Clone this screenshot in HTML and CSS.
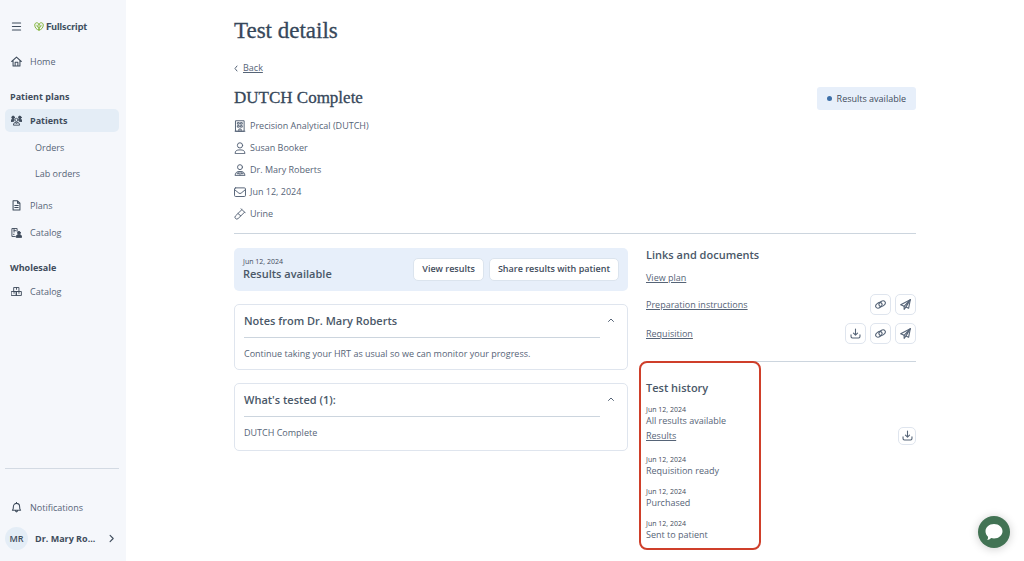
FILE: index.html
```html
<!DOCTYPE html>
<html lang="en">
<head>
  <meta charset="UTF-8">
  <meta name="viewport" content="width=device-width, initial-scale=1.0">
  <title>Test details</title>
  <link rel="stylesheet" href="styles.css">
</head>
<body>

  <!-- shared icons -->
  <svg class="sprite" aria-hidden="true">
    <symbol id="download" viewBox="0 0 16 16"><path d="M8 1.500v8.500M5 7.500l3 3 3-3M1.500 10v2.500a2 2 0 0 0 2 2h9a2 2 0 0 0 2-2V10"/></symbol>
    <symbol id="link" viewBox="0 0 16 16"><ellipse cx="5.600" cy="9.200" rx="5" ry="3.500" transform="rotate(-35 5.600 9.200)"/><ellipse cx="10.400" cy="6.800" rx="5" ry="3.500" transform="rotate(-35 10.400 6.800)"/></symbol>
    <symbol id="send" viewBox="0 0 16 16"><path d="M1 8.500L15 1l-2.500 12.500-4-1.700L6 15v-4.300z"/><path d="M15 1L6 10.700M15 1L8.500 11.800"/></symbol>
    <symbol id="up" viewBox="0 0 16 16"><path d="M3 11l5-5 5 5"/></symbol>
  </svg>

  <aside class="sidebar">
    <div class="brand">
      <button class="menu-btn" aria-label="Menu">
        <svg class="icon" viewBox="0 0 16 16"><path d="M2 3h12M2 8h12M2 13h12"/></svg>
      </button>
      <a href="#" class="logo">
        <svg viewBox="0 0 20 18"><path d="M10 16V5M10 16C5 16 1.500 11 1.500 6c0-3 2-4.500 4-4.500C8 1.500 10 3.500 10 5.500c0-2 2-4 4.500-4 2 0 4 1.500 4 4.500 0 5-3.500 10-8.500 10zM10 12C7.500 11.500 6 9.500 6 6.500M10 12c2.500-.5 4-2.500 4-5.500"/></svg>
        <span>Fullscript</span>
      </a>
    </div>

    <nav class="nav">
      <a href="#" class="nav-link home">
        <svg class="icon" viewBox="0 0 16 16"><path d="M1 8l7-6.500L15 8M3 6.500V14.500h10V6.500M6 14.500V9h4v5.500"/></svg>
        Home
      </a>
      <h2>Patient plans</h2>
      <a href="#" class="nav-link active">
        <svg class="icon solid" viewBox="0 0 18 16"><circle cx="3.500" cy="3" r="2.200"/><circle cx="14.500" cy="3" r="2.200"/><path d="M0 9c0-2 1-3 3-3h2L4.500 9zM18 9c0-2-1-3-3-3h-2l.5 3z"/><g class="line"><circle cx="9" cy="7" r="2.600"/><path d="M4 15c0-2.500 1.500-4 5-4s5 1.500 5 4zM7 11.500l2 2 2-2"/></g></svg>
        Patients
      </a>
      <a href="#" class="nav-link sub">Orders</a>
      <a href="#" class="nav-link sub">Lab orders</a>
      <a href="#" class="nav-link plans">
        <svg class="icon" viewBox="0 0 16 16"><path d="M3 1.200h6.500L13 4.700v10H3zM9.500 1.200v3.500H13M5.500 8h5M5.500 11h5"/></svg>
        Plans
      </a>
      <a href="#" class="nav-link">
        <svg class="icon" viewBox="0 0 18 16"><path d="M7 14.500H1.500v-13H10V6M5 1.500v6M5 5h3M4 11h1"/><g class="fill"><circle cx="13" cy="8.500" r="2.300"/><path d="M8.500 15.500c0-3 1.500-4 4.500-4s4.500 1 4.500 4z"/></g></svg>
        Catalog
      </a>
      <h2>Wholesale</h2>
      <a href="#" class="nav-link">
        <svg class="icon" viewBox="0 0 18 16"><path d="M5 1.500h8v6.500H5zM1 8h8v6.500H1zM9 8h8v6.500H9zM9 1.500v3M5 8v3M13 8v3"/></svg>
        Catalog
      </a>
    </nav>

    <div class="account">
      <a href="#" class="nav-link">
        <svg class="icon" viewBox="0 0 16 16"><path d="M2 12c1.500-1.500 1.500-3 1.500-5.500a4.500 4.500 0 0 1 9 0c0 2.500 0 4 1.500 5.500zM6.500 12.500c0 2.500 3 2.500 3 0M8 .5V2"/></svg>
        Notifications
      </a>
      <button class="user">
        <span class="avatar">MR</span>
        <span class="user-name">Dr. Mary Ro...</span>
        <svg class="icon" viewBox="0 0 16 16"><path d="M5.500 2.500L11 8l-5.500 5.500"/></svg>
      </button>
    </div>
  </aside>

  <main class="main">
    <div class="page">
      <h1>Test details</h1>
      <a href="#" class="back">
        <svg viewBox="0 0 8 14"><path d="M6 2L2 7l4 5"/></svg>
        <span>Back</span>
      </a>

      <div class="title-row">
        <h2>DUTCH Complete</h2>
        <span class="status">Results available</span>
      </div>

      <ul class="facts">
        <li>
          <svg class="icon" viewBox="0 0 16 16"><path d="M2.500 1h11v14h-11zM1.500 15h13M5 3.500h2v2H5zM9 3.500h2v2H9zM5 7.500h2v2H5zM9 7.500h2v2H9zM6.500 15v-3h3v3"/></svg>
          Precision Analytical (DUTCH)
        </li>
        <li>
          <svg class="icon" viewBox="0 0 16 16"><circle cx="8" cy="4.500" r="3.500"/><path d="M1.500 15c0-3.500 2-4.500 6.500-4.500s6.500 1 6.500 4.500z"/></svg>
          Susan Booker
        </li>
        <li>
          <svg class="icon" viewBox="0 0 16 16"><circle cx="8" cy="4.200" r="3.300"/><path d="M1.500 15c0-3.500 2-5 6.500-5s6.500 1.500 6.500 5zM5.500 10.500V13M10.500 10.500V13M8 11v4M4 13h3M9.500 13h3"/></svg>
          Dr. Mary Roberts
        </li>
        <li>
          <svg class="icon" viewBox="0 0 16 16"><rect x=".7" y="2.500" width="14.600" height="11.500" rx="1.500"/><path d="M1 5l5.500 4.500q1.500 1 3 0L15 5"/></svg>
          Jun 12, 2024
        </li>
        <li>
          <svg class="icon" viewBox="0 0 16 16"><path d="M9.500 1l5.500 5.500M10.500 2.200L2 10.500a2.400 2.400 0 0 0 3.500 3.500L14 5.700M5.500 7.500L9 10.500"/></svg>
          Urine
        </li>
      </ul>

      <div class="columns">
        <div class="left">
          <section class="banner">
            <div>
              <p class="date">Jun 12, 2024</p>
              <h3>Results available</h3>
            </div>
            <div class="actions">
              <button class="btn">View results</button>
              <button class="btn">Share results with patient</button>
            </div>
          </section>

          <section class="card">
            <div class="card-body">
              <h3>Notes from Dr. Mary Roberts</h3>
              <p>Continue taking your HRT as usual so we can monitor your progress.</p>
            </div>
            <button class="toggle" aria-label="Collapse notes"><svg><use href="#up"/></svg></button>
          </section>

          <section class="card tested">
            <div class="card-body">
              <h3>What's tested (1):</h3>
              <p>DUTCH Complete</p>
            </div>
            <button class="toggle" aria-label="Collapse tests"><svg><use href="#up"/></svg></button>
          </section>
        </div>

        <div class="right">
          <section class="links">
            <h3>Links and documents</h3>
            <div class="link-row"><a href="#">View plan</a></div>
            <div class="link-row tall">
              <a href="#">Preparation instructions</a>
              <button class="icon-btn" aria-label="Copy link"><svg><use href="#link"/></svg></button>
              <button class="icon-btn" aria-label="Send"><svg><use href="#send"/></svg></button>
            </div>
            <div class="link-row tall">
              <a href="#">Requisition</a>
              <button class="icon-btn" aria-label="Download"><svg><use href="#download"/></svg></button>
              <button class="icon-btn" aria-label="Copy link"><svg><use href="#link"/></svg></button>
              <button class="icon-btn" aria-label="Send"><svg><use href="#send"/></svg></button>
            </div>
          </section>

          <section class="history">
            <h3>Test history</h3>
            <ol>
              <li>
                <p class="date">Jun 12, 2024</p>
                <p>All results available</p>
                <div class="result-row">
                  <a href="#">Results</a>
                  <button class="icon-btn small" aria-label="Download results"><svg><use href="#download"/></svg></button>
                </div>
              </li>
              <li><p class="date">Jun 12, 2024</p><p>Requisition ready</p></li>
              <li><p class="date">Jun 12, 2024</p><p>Purchased</p></li>
              <li><p class="date">Jun 12, 2024</p><p>Sent to patient</p></li>
            </ol>
            <div class="highlight"></div>
          </section>
        </div>
      </div>
    </div>
  </main>

  <button class="chat" aria-label="Open chat">
    <svg viewBox="0 0 20 20"><path d="M10 2c5 0 8.500 3.300 8.500 7.300s-3.500 7.200-8.500 7.200c-1 0-2-.1-2.800-.4C6 17.300 4.500 18 3.200 18c.7-1 1-2.200.8-3.300C2.400 13.400 1.500 11.500 1.500 9.300 1.500 5.300 5 2 10 2z"/></svg>
  </button>

</body>
</html>
```

FILE: styles.css
```css
* {
  margin: 0;
  padding: 0;
  box-sizing: border-box;
}

body {
  display: flex;
  min-height: 100vh;
  font-family: "Open Sans", "Noto Sans", sans-serif;
  font-size: 9px;
  line-height: 12px;
  color: #566477;
  background: #fff;
}

a {
  color: inherit;
}

button {
  font: inherit;
  color: inherit;
  background: none;
  border: none;
  cursor: pointer;
}

ul, ol {
  list-style: none;
}

svg {
  display: block;
  fill: none;
  stroke: currentColor;
  stroke-width: 1.5;
  stroke-linecap: round;
  stroke-linejoin: round;
}

.sprite {
  position: absolute;
  width: 0;
  height: 0;
}

.icon {
  width: 12px;
  height: 12px;
  flex: none;
}

.icon.solid, .fill {
  fill: currentColor;
}

.line {
  fill: none;
}

/* Sidebar */
.sidebar {
  display: flex;
  flex-direction: column;
  flex: none;
  width: 126px;
  padding: 15px 7px 11px 5px;
  background: #f5f7fb;
}

.brand {
  display: flex;
  align-items: center;
  gap: 12px;
  height: 22px;
  padding-left: 6px;
}

.logo {
  display: flex;
  align-items: center;
  gap: 2px;
  font-family: Lato, sans-serif;
  font-size: 10px;
  font-weight: 900;
  color: #40505f;
  text-decoration: none;
}

.logo svg {
  width: 10px;
  height: 9px;
  stroke: #83b53b;
  stroke-width: 2;
}

.nav h2 {
  margin: 16px 0 4px 5px;
  font-size: 9px;
  line-height: 16px;
  color: #3f4c5c;
}

.nav-link {
  display: flex;
  align-items: center;
  gap: 8px;
  height: 23px;
  margin-bottom: 4px;
  padding: 0 6px;
  border-radius: 5px;
  text-decoration: none;
}

.nav-link .icon, .menu-btn .icon {
  width: 11px;
  height: 11px;
  color: #3f4c5c;
}

.nav-link.home {
  margin-top: 13px;
}

.nav-link.active {
  font-weight: 700;
  color: #3f4c5c;
  background: #e4edf6;
}

.nav-link.sub {
  height: 21px;
  margin: 5px 0 4px;
  padding-left: 30px;
}

.nav-link.plans {
  margin-top: 10px;
}

.account {
  margin-top: auto;
  padding-top: 27px;
  border-top: 1px solid #d3dae3;
}

.user {
  display: flex;
  align-items: center;
  width: 100%;
  margin-top: 8px;
  font-weight: 700;
  color: #3f4c5c;
}

.avatar {
  width: 23px;
  height: 23px;
  margin-right: 7px;
  border-radius: 50%;
  line-height: 23px;
  font-weight: 600;
  background: #e4edf6;
}

.user .icon {
  width: 9px;
  height: 9px;
  margin: 0 3px 0 auto;
  stroke-width: 2;
}

/* Page */
.main {
  flex: 1;
  padding: 17px 20px 10px;
}

.page {
  max-width: 682px;
  margin: 0 auto;
}

h1, .title-row h2 {
  font-family: "Liberation Serif", serif;
  font-weight: 400;
  color: #36475a;
  -webkit-text-stroke: 0.3px currentColor;
}

h1 {
  font-size: 23px;
  line-height: 28px;
}

.back {
  display: inline-flex;
  align-items: center;
  gap: 5px;
  margin-top: 17px;
  text-decoration: none;
}

.back span {
  text-decoration: underline;
}

.back svg {
  width: 4px;
  height: 7px;
  stroke-width: 2;
}

.title-row {
  display: flex;
  align-items: center;
  justify-content: space-between;
  height: 23px;
  margin-top: 12px;
}

.title-row h2 {
  font-size: 17px;
  line-height: 22px;
}

.status {
  display: flex;
  align-items: center;
  gap: 5px;
  padding: 0 10px;
  border-radius: 3px;
  line-height: 23px;
  font-weight: 500;
  color: #3f4c5c;
  background: #e7effa;
}

.status::before {
  content: "";
  width: 5px;
  height: 5px;
  border-radius: 50%;
  background: #3d6fa8;
}

.facts {
  display: grid;
  gap: 10px;
  margin-top: 10px;
  padding-bottom: 13px;
  border-bottom: 1px solid #ccd5de;
}

.facts li {
  display: flex;
  align-items: center;
  gap: 4px;
}

.facts .icon {
  stroke-width: 1.3;
}

.columns {
  display: grid;
  grid-template-columns: 1fr 270px;
  gap: 18px;
  margin-top: 14px;
}

h3 {
  font-size: 11px;
  line-height: 14px;
  font-weight: 600;
  color: #4a5868;
}

.date {
  font-size: 7px;
  line-height: 10px;
  color: #3f4c5c;
}

.banner {
  display: flex;
  align-items: center;
  justify-content: space-between;
  height: 43px;
  padding: 0 9px;
  border-radius: 5px;
  background: #e7effa;
}

.actions {
  display: flex;
  gap: 5px;
}

.btn {
  height: 23px;
  padding: 0 8px;
  border: 1px solid #dbe4ee;
  border-radius: 5px;
  font-weight: 600;
  color: #3f4c5c;
  background: #fff;
}

.card {
  display: flex;
  align-items: flex-start;
  justify-content: space-between;
  margin-top: 13px;
  padding: 9px;
  border: 1px solid #dfe5ee;
  border-radius: 5px;
}

.card-body {
  flex: 1;
}

.card h3 {
  padding-bottom: 9px;
  border-bottom: 1px solid #ccd5de;
}

.card p {
  padding-top: 10px;
}

.card.tested {
  padding-bottom: 11px;
}

.toggle {
  margin: 2px 3px 0 7px;
}

.toggle svg {
  width: 8px;
  height: 8px;
  stroke-width: 2;
}

.links {
  padding-bottom: 16px;
  border-bottom: 1px solid #ccd5de;
}

.link-row {
  display: flex;
  align-items: center;
  gap: 4px;
  height: 18px;
  margin-top: 7px;
}

.link-row.tall {
  height: 22px;
}

.link-row a {
  margin-right: auto;
}

.icon-btn {
  display: grid;
  place-items: center;
  width: 21px;
  height: 21px;
  border: 1px solid #dfe5ee;
  border-radius: 5px;
}

.icon-btn svg {
  width: 11px;
  height: 11px;
  stroke-width: 1.6;
}

.icon-btn.small {
  width: 18px;
  height: 18px;
}

/* Test history */
.history {
  position: relative;
  padding: 19px 0 9px;
}

.history h3 {
  margin-bottom: 10px;
}

.history li + li {
  margin-top: 10px;
}

.result-row {
  display: flex;
  align-items: center;
  justify-content: space-between;
  height: 18px;
}

.highlight {
  position: absolute;
  top: -1px;
  bottom: 0;
  left: -7px;
  width: 122px;
  border: 2px solid #cf3f2a;
  border-radius: 8px;
  pointer-events: none;
}

.chat {
  position: fixed;
  right: 14px;
  bottom: 13px;
  display: grid;
  place-items: center;
  width: 32px;
  height: 32px;
  border-radius: 50%;
  background: #427354;
  box-shadow: 0 1px 10px rgba(0, 0, 0, 0.2);
}

.chat svg {
  width: 20px;
  height: 20px;
  fill: #fff;
  stroke: none;
}
```
